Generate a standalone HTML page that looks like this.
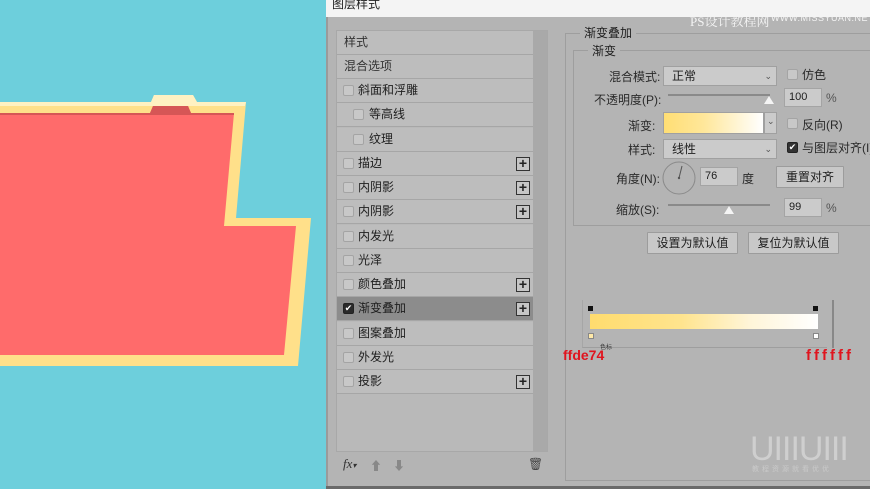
<!DOCTYPE html>
<html><head><meta charset="utf-8"><style>
*{margin:0;padding:0;box-sizing:border-box}
body{width:870px;height:489px;overflow:hidden;background:#6dcfdc;position:relative;font-family:"Liberation Sans","Noto Sans CJK SC",sans-serif;font-size:12px;color:#1e1e1e}
.abs{position:absolute}
.dlg{left:326px;top:0;width:544px;height:489px;background:#b4b4b4;border-left:2px solid #9a9a9a}
.title{left:326px;top:0;width:544px;height:17px;background:#f4f4f4}
.title span{position:absolute;left:6px;top:-5px;font-size:12px;color:#222}
.list{left:336px;top:30px;width:212px;height:422px;background:#b9b9b9;border:1px solid #a8a8a8}
.row{position:absolute;left:0;width:196px;height:24px;border-bottom:1px solid #a6a6a6;background:#bdbdbd;font-size:12px;line-height:23px}
.row.sel{background:#8c8c8c}
.cb{position:absolute;top:6px;width:11px;height:11px;background:#c8c8c8;border:1px solid #a4a4a4;border-radius:2px}
.plus{position:absolute;left:179px;top:5px;width:14px;height:14px;border:1px solid #333;background:#c6c6c6;font-size:14px;line-height:11px;text-align:center;font-weight:bold;color:#222}
.sb{left:533px;top:31px;width:14px;height:420px;background:#a9a9a9}
.lbl{font-size:12px;color:#2a2a2a}
.sel2{background:#cbcbcb;border:1px solid #a0a0a0;height:20px}
.inp{background:#cbcbcb;border:1px solid #a4a4a4;height:19px;font-size:11px;padding-left:4px;line-height:17px}
.btn{background:#c8c8c8;border:1px solid #9c9c9c;height:22px;text-align:center;line-height:20px;font-size:12px;border-radius:1px}
</style></head><body>
<svg class="abs" style="left:0;top:0" width="326" height="489">
<path d="M0 102 L151 102 L154 95 L193 95 L197 102 L246 102 L236 218 L311 218 L298 366 L0 366 Z" fill="#ffe08a"/>
<path d="M0 102 L151 102 L154 95 L193 95 L197 102 L246 102 L245 106 L0 106 Z" fill="#fff1c2"/>
<path d="M0 113 L150 113 L153 106 L188 106 L191 113 L234 113 L224 226 L296 226 L284 355 L0 355 Z" fill="#ff6b6b"/>
<path d="M0 113 L150 113 L153 106 L188 106 L191 113 L234 113 L234 115 L0 115 Z" fill="#d65656"/>
</svg>
<div class="abs dlg"></div>
<div class="abs title"><span>图层样式</span></div>
<div class="abs list">
<div class="row" style="top:0;padding-left:7px;color:#333">样式</div>
<div class="row" style="top:24px;padding-left:7px;color:#333">混合选项</div>
<div class="row" style="top:48px"><div class="cb" style="left:6px"></div><span style="position:absolute;left:21px">斜面和浮雕</span></div>
<div class="row" style="top:72px"><div class="cb" style="left:16px"></div><span style="position:absolute;left:32px">等高线</span></div>
<div class="row" style="top:97px"><div class="cb" style="left:16px"></div><span style="position:absolute;left:32px">纹理</span></div>
<div class="row" style="top:121px"><div class="cb" style="left:6px"></div><span style="position:absolute;left:21px">描边</span><div class="plus">+</div></div>
<div class="row" style="top:145px"><div class="cb" style="left:6px"></div><span style="position:absolute;left:21px">内阴影</span><div class="plus">+</div></div>
<div class="row" style="top:169px"><div class="cb" style="left:6px"></div><span style="position:absolute;left:21px">内阴影</span><div class="plus">+</div></div>
<div class="row" style="top:194px"><div class="cb" style="left:6px"></div><span style="position:absolute;left:21px">内发光</span></div>
<div class="row" style="top:218px"><div class="cb" style="left:6px"></div><span style="position:absolute;left:21px">光泽</span></div>
<div class="row" style="top:242px"><div class="cb" style="left:6px"></div><span style="position:absolute;left:21px">颜色叠加</span><div class="plus">+</div></div>
<div class="row sel" style="top:266px"><div class="cb" style="left:6px;background:#2a2a2a;border-color:#222;color:#fff;font-size:9px;line-height:9px;text-align:center">✔</div><span style="position:absolute;left:21px">渐变叠加</span><div class="plus">+</div></div>
<div class="row" style="top:291px"><div class="cb" style="left:6px"></div><span style="position:absolute;left:21px">图案叠加</span></div>
<div class="row" style="top:315px"><div class="cb" style="left:6px"></div><span style="position:absolute;left:21px">外发光</span></div>
<div class="row" style="top:339px"><div class="cb" style="left:6px"></div><span style="position:absolute;left:21px">投影</span><div class="plus">+</div></div>
</div>
<div class="abs sb"></div>
<div class="abs" style="left:343px;top:456px;font-family:'Liberation Serif',serif;font-style:italic;font-size:13px;color:#333">fx<span style="font-size:8px">▾</span></div>
<div class="abs" style="left:370px;top:457px;font-size:12px;color:#888">⬆</div>
<div class="abs" style="left:393px;top:457px;font-size:12px;color:#888">⬇</div>
<div class="abs" style="left:528px;top:457px;font-size:12px;color:#444">🗑</div>

<div class="abs" style="left:565px;top:33px;width:310px;height:448px;border:1px solid #9e9e9e"></div>
<div class="abs" style="left:580px;top:24px;padding:0 4px;background:#b4b4b4;font-size:12px">渐变叠加</div>
<div class="abs" style="left:573px;top:50px;width:300px;height:176px;border:1px solid #9e9e9e"></div>
<div class="abs" style="left:588px;top:42px;padding:0 4px;background:#b4b4b4;font-size:12px">渐变</div>
<div class="abs" style="left:690px;top:11px;font-size:13px;color:#f4f4f4;font-family:'Liberation Serif','Noto Serif CJK SC',serif">PS设计教程网</div>
<div class="abs" style="left:771px;top:13px;font-size:9px;color:#f4f4f4;letter-spacing:.5px">WWW.MISSYUAN.NET</div>

<div class="abs lbl" style="left:609px;top:68px">混合模式:</div>
<div class="abs sel2" style="left:663px;top:66px;width:114px;padding-left:8px;line-height:18px">正常<span style="position:absolute;right:4px;font-size:9px;color:#555">⌄</span></div>
<div class="abs cb" style="left:787px;top:69px"></div><div class="abs lbl" style="left:802px;top:66px">仿色</div>
<div class="abs lbl" style="left:594px;top:91px">不透明度(P):</div>
<div class="abs" style="left:668px;top:94px;width:102px;height:2px;background:#8a8a8a"></div>
<div class="abs" style="left:764px;top:96px;width:0;height:0;border-left:5px solid transparent;border-right:5px solid transparent;border-bottom:8px solid #f4f4f4"></div>
<div class="abs inp" style="left:784px;top:88px;width:38px">100</div><div class="abs lbl" style="left:826px;top:91px;color:#555">%</div>
<div class="abs lbl" style="left:628px;top:117px">渐变:</div>
<div class="abs" style="left:663px;top:112px;width:101px;height:22px;background:linear-gradient(90deg,#ffde74,#ffe79a 40%,#fff 100%);border:1px solid #a0a0a0"></div>
<div class="abs sel2" style="left:764px;top:112px;width:13px;height:22px"><span style="position:absolute;left:2px;font-size:9px;color:#555;top:3px">⌄</span></div>
<div class="abs cb" style="left:787px;top:118px"></div><div class="abs lbl" style="left:802px;top:116px">反向(R)</div>
<div class="abs lbl" style="left:628px;top:141px">样式:</div>
<div class="abs sel2" style="left:663px;top:139px;width:114px;padding-left:8px;line-height:18px">线性<span style="position:absolute;right:4px;font-size:9px;color:#555">⌄</span></div>
<div class="abs cb" style="left:787px;top:142px;background:#333;border-color:#222;color:#fff;font-size:9px;line-height:9px;text-align:center">✔</div><div class="abs lbl" style="left:802px;top:139px;white-space:nowrap">与图层对齐(I)</div>
<div class="abs lbl" style="left:616px;top:170px">角度(N):</div>
<svg class="abs" style="left:662px;top:161px" width="34" height="34"><circle cx="17" cy="17" r="16" fill="none" stroke="#8a8a8a"/><line x1="17" y1="17" x2="20" y2="5" stroke="#555"/><circle cx="17" cy="17" r="1.2" fill="#555"/></svg>
<div class="abs inp" style="left:700px;top:167px;width:38px">76</div><div class="abs lbl" style="left:742px;top:170px">度</div>
<div class="abs btn" style="left:776px;top:166px;width:68px">重置对齐</div>
<div class="abs lbl" style="left:616px;top:201px">缩放(S):</div>
<div class="abs" style="left:668px;top:204px;width:102px;height:2px;background:#8a8a8a"></div>
<div class="abs" style="left:724px;top:206px;width:0;height:0;border-left:5px solid transparent;border-right:5px solid transparent;border-bottom:8px solid #f4f4f4"></div>
<div class="abs inp" style="left:784px;top:198px;width:38px">99</div><div class="abs lbl" style="left:826px;top:201px;color:#555">%</div>
<div class="abs btn" style="left:647px;top:232px;width:91px">设置为默认值</div>
<div class="abs btn" style="left:748px;top:232px;width:91px">复位为默认值</div>

<div class="abs" style="left:582px;top:300px;width:245px;height:48px;border-bottom:1px solid #9e9e9e;border-left:1px solid #a6a6a6"></div>
<div class="abs" style="left:832px;top:300px;width:2px;height:48px;background:#888"></div>
<div class="abs" style="left:588px;top:306px;width:5px;height:5px;background:#111"></div>
<div class="abs" style="left:813px;top:306px;width:5px;height:5px;background:#111"></div>
<div class="abs" style="left:590px;top:314px;width:228px;height:15px;background:linear-gradient(90deg,#ffdc6e,#ffe48e 40%,#fff5d8 70%,#fff)"></div>
<div class="abs" style="left:588px;top:333px;width:6px;height:6px;background:#ffe9a8;border:1px solid #888"></div>
<div class="abs" style="left:813px;top:333px;width:6px;height:6px;background:#fff;border:1px solid #888"></div>
<div class="abs" style="left:600px;top:342px;font-size:6px;color:#333">色标</div>
<div class="abs" style="left:563px;top:347px;font-family:'Liberation Sans',sans-serif;font-weight:bold;font-size:14px;color:#e0141e">ffde74</div>
<div class="abs" style="left:806px;top:347px;font-family:'Liberation Sans',sans-serif;font-weight:bold;font-size:15px;letter-spacing:3px;color:#e0141e">ffffff</div>
<div class="abs" style="left:750px;top:430px;font-size:34px;color:#cfcfcf;letter-spacing:-1px;font-family:'Liberation Sans',sans-serif">UIIIUIII</div>
<div class="abs" style="left:752px;top:464px;font-size:7px;color:#cacaca;letter-spacing:3px">教程资源就看优优</div>
<div class="abs" style="left:326px;top:486px;width:544px;height:3px;background:#6a6a6a"></div>
</body></html>
